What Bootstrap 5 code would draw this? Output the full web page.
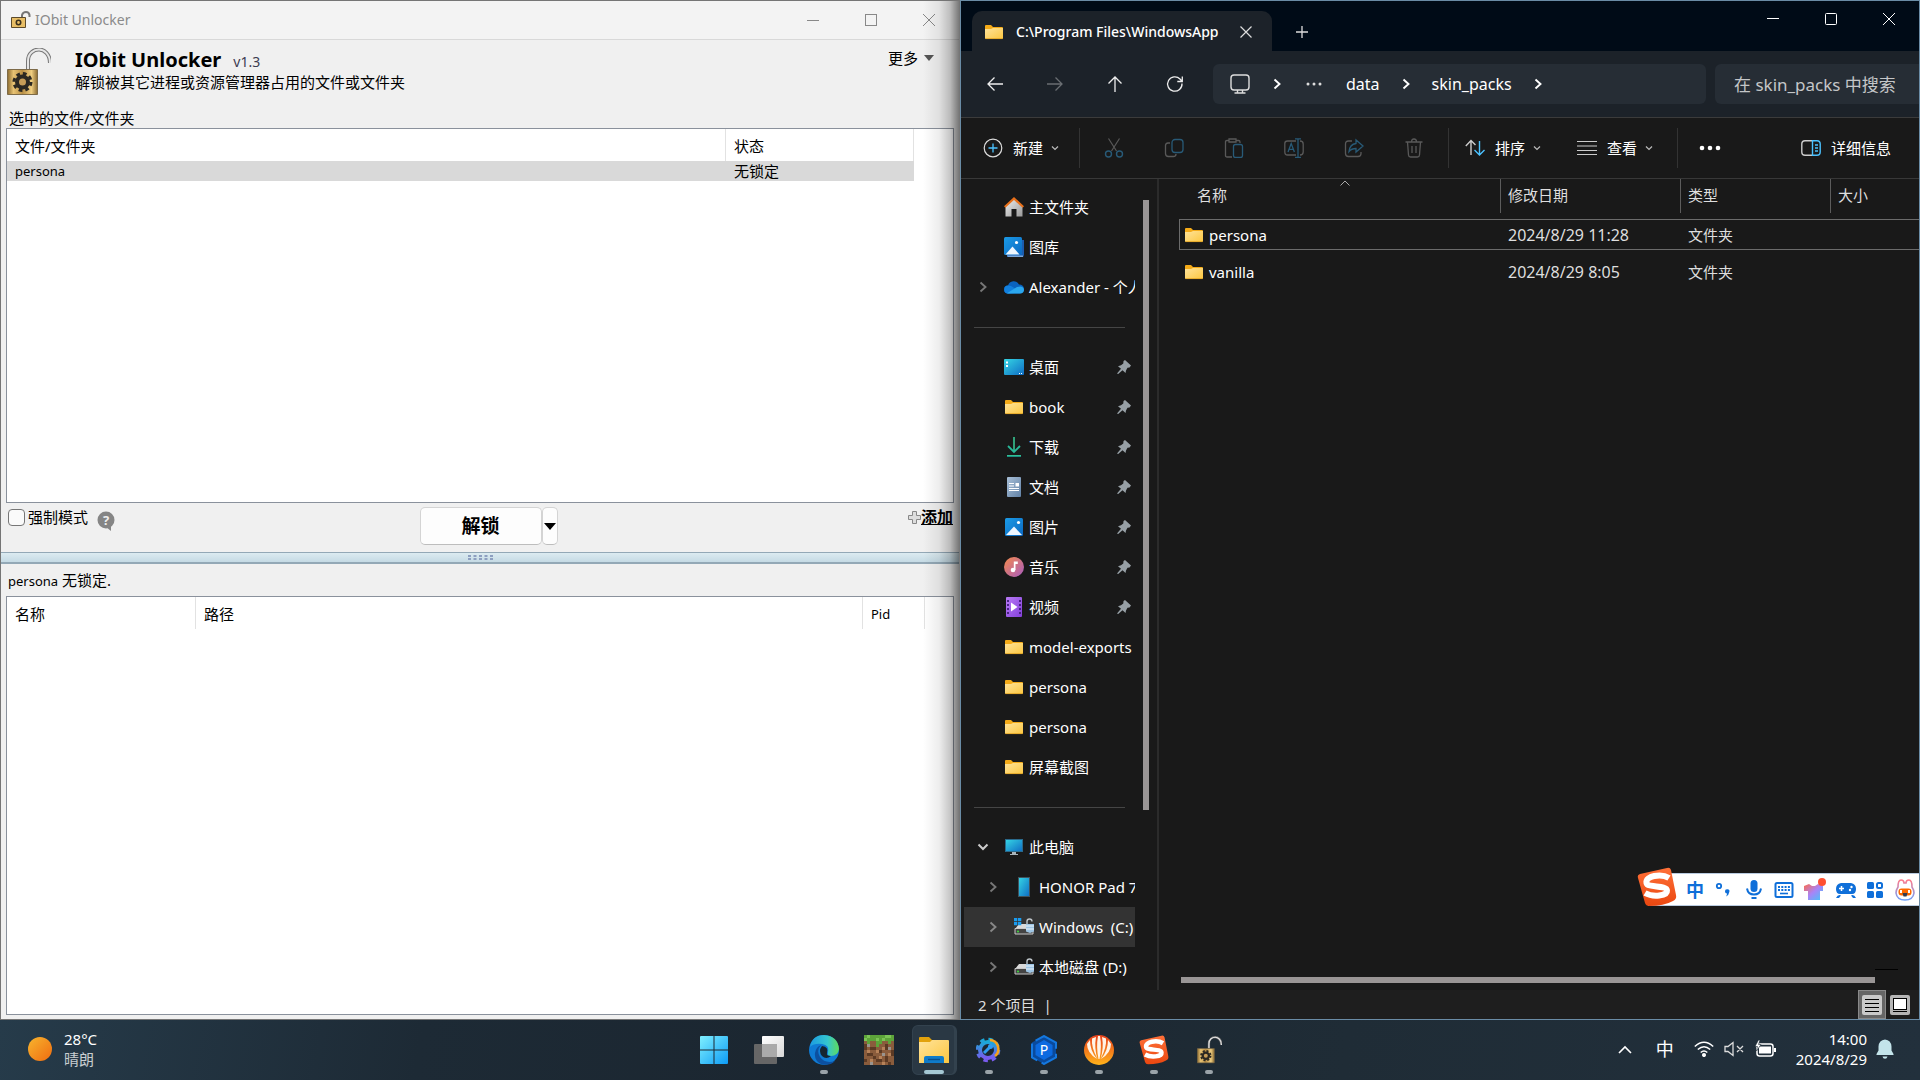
<!DOCTYPE html>
<html lang="zh-CN" data-bs-theme="light">
<head>
<meta charset="utf-8">
<meta name="viewport" content="width=device-width, initial-scale=1">
<title>Desktop</title>
<link href="https://cdn.jsdelivr.net/npm/bootstrap@5.3.0/dist/css/bootstrap.min.css" rel="stylesheet">
<style>
  body { font-family: "Noto Sans", "Noto Sans CJK SC", sans-serif; font-size: 15px; line-height: 20px; color: #000; background: #1b2731; }
  svg { display: block; flex: none; }
  button { background: none; border: 0; padding: 0; color: inherit; font: inherit; line-height: 20px; }
  a { color: inherit; text-decoration: none; }
  th { font-weight: 400; }
  .defs { position: absolute; width: 0; height: 0; }
  .desk { min-height: 0; }
  .pane { flex: 1 1 0; min-width: 0; }

  /* unlocker window */
  .unlocker { background: #f0f0f0; border: 1px solid #757575; overflow: hidden; }
  .unlocker::after { content: ""; position: absolute; inset: 0 0 0 auto; width: 36px; pointer-events: none; background: linear-gradient(90deg, rgba(0,0,0,0), rgba(0,0,0,.07) 45%, rgba(0,0,0,.22) 75%, rgba(0,0,0,.5)); }
  .u-title { height: 39px; background: #f3f3f3; border-bottom: 1px solid #d8d8d8; color: #8b8b8b; font-size: 14px; padding: 0 24px 0 10px; }
  .win-ctl { gap: 46px; }
  .u-head { height: 68px; padding: 8px 23px 0 6px; }
  .u-name { font-size: 20px; font-weight: 700; line-height: 24px; margin: 0; }
  .u-ver { font-size: 14px; color: #3c3c50; }
  .u-list { background: #fff; border: 1px solid #8a919c; margin: 0 5px; }
  .u-list table { width: 100%; table-layout: fixed; border-collapse: separate; border-spacing: 0; }
  .u-list th { height: 32px; padding: 2px 8px 0; border-right: 1px solid #e2e2e2; line-height: 20px; }
  .u-list th:last-child { border-right: 0; }
  .u-list td { height: 20px; line-height: 20px; padding: 0 8px; background: #d9d9d9; }
  .u-list td:last-child { background: none; }
  .small-latin { font-size: 13px; }
  .u-files { height: 375px; }
  .u-tools { height: 49px; padding: 4px 6px 0 7px; }
  .u-tools > div { flex: 1 1 0; }
  .u-force { gap: 3px; }
  .force { appearance: none; width: 17px; height: 17px; margin: 0; border: 1px solid #767676; border-radius: 4px; background: #fafafa; }
  .u-btn { height: 38px; background: #fdfdfd; border: 1px solid #d4d4d4; border-bottom-color: #bdbdbd; border-radius: 5px; }
  .u-main { width: 122px; font-size: 19px; font-weight: 700; }
  .u-drop { width: 16px; }
  .u-add { font-size: 16px; font-weight: 700; text-decoration: underline; }
  .u-split { height: 12px; border: solid #93a8b6; border-width: 1px 0 2px; background: linear-gradient(#dcebf1, #c5dae4); }
  .u-status { height: 32px; padding: 6px 7px; }

  /* file explorer */
  .explorer { background: #191919; border: 1px solid #6a8ca6; color: #fff; overflow: hidden; }
  .x-title { height: 50px; background: #000b17; padding-left: 11px; }
  .x-tab { width: 300px; height: 40px; background: #1c2229; border-radius: 10px 10px 0 0; padding: 2px 20px 0 12px; font-size: 14px; font-weight: 500; margin-top: 10px; }
  .x-nav { height: 67px; background: #1c2229; border-bottom: 1px solid #3b3b3b; padding: 13px 0 13px 24px; }
  .x-navbtns { gap: 40px; width: 228px; }
  .x-addr { height: 40px; background: #262d35; border-radius: 6px; font-size: 16px; padding: 0 14px 0 16px; gap: 21px; flex: 1 1 auto; }
  .x-search { width: 204px; height: 40px; margin-left: 9px; background: #262d35; border: 0; border-radius: 6px 0 0 6px; padding: 0 0 0 19px; font-size: 17px; color: #ccc; }
  .x-search::placeholder { color: #c4c6c8; opacity: 1; }
  .x-cmd { height: 61px; border-bottom: 1px solid #383838; padding: 0 28px 0 22px; }
  .x-edit { gap: 40px; }
  .x-lab { margin: 0 8px 0 10px; }
  .x-rule { width: 1px; height: 40px; background: #333; }
  .x-tree { width: 198px; padding: 8px 0 0 3px; border-right: 2px solid #2b2b2b; overflow: hidden; }
  .x-tree ul { width: 171px; list-style: none; margin: 0; padding: 0; }
  .x-item { height: 40px; padding-left: 9px; white-space: pre; overflow: hidden; }
  .x-item.sub { padding-left: 19px; }
  .x-item.picked { background: #333; }
  .x-chev { width: 20px; margin-right: 11px; flex: none; }
  .x-ico { width: 20px; margin-right: 5px; }
  .x-pin { margin-left: auto; margin-right: 4px; }
  .x-sep { height: 40px; padding: 20px 10px 0; }
  .x-sep hr { margin: 0; border-top: 1px solid #454545; opacity: 1; }
  .x-vbar { width: 6px; height: 610px; margin: 13px 0 0 8px; background: #999595; }
  .x-files { padding-left: 20px; }
  .x-files table { width: 100%; table-layout: fixed; border-collapse: separate; border-spacing: 0 6px; margin-top: -6px; }
  .x-files th { height: 34px; padding: 0 7px 2px; border-left: 1px solid #5c5c5c; color: #dedede; }
  .x-files th:first-child { border-left: 0; padding-left: 18px; }
  .x-files td { height: 31px; padding: 0 8px; border: solid transparent; border-width: 1px 0; color: #dedede; }
  .x-files td:first-child { border-left-width: 1px; padding: 0 4px; color: #fff; }
  .x-files .focused td { border-color: #6b6b6b; }
  .x-date { font-size: 16px; }
  .x-sort { position: absolute; left: 50%; top: 1px; }
  .x-hbar { height: 6px; background: #999595; margin: 0 44px 7px 2px; }
  .x-mark { position: absolute; right: 21px; bottom: 20px; width: 23px; height: 1px; background: #000; }
  .x-foot { height: 29px; background: #1e1e1e; padding: 0 9px 0 17px; color: #dedede; }
  .x-view { width: 28px; height: 29px; }
  .x-view.on { background: #666; border: 1px solid #8a8a8a; }

  /* input method bar */
  .ime { position: absolute; right: 0; bottom: 84px; height: 33px; padding: 0 3px 0 38px; gap: 10px; background: #fff; border: solid #b9cbe0; border-width: 1px 0; color: #0f6fd9; }
  .ime-logo { position: absolute; left: -11px; top: -7px; }
  .ime-word { font-size: 18px; font-weight: 700; }

  /* taskbar */
  .dock { height: 60px; color: #fff; background: linear-gradient(100deg, #263b4a, #1d2a35 22%, #1b2630 45%, #1f2c36 70%, #22303c 100%); }
  .dock > div { flex: 1 1 0; }
  .dock-weather { padding: 0 0 2px 28px; gap: 12px; }
  .dock-app { width: 55px; height: 60px; }
  .dock-app.open::after { content: ""; position: absolute; left: 50%; bottom: 6px; width: 8px; height: 4px; margin-left: -4px; border-radius: 2px; background: #9aa3a9; }
  .dock-app.front::before { content: ""; position: absolute; inset: 5px; border-radius: 6px; background: #2a3844; border: 1px solid #33424e; border-right-width: 3px; }
  .dock-app.front::after { width: 20px; margin-left: -10px; background: #a5c8d4; }
  .dock-app svg { position: relative; }
  .dock-tray { padding: 0 25px 2px 0; }
  .dock-ime { font-size: 18px; }
  .dock-status { gap: 10px; margin-right: 20px; }
</style>
</head>
<body class="vh-100 overflow-hidden d-flex flex-column">

<svg class="defs" aria-hidden="true">
  <defs>
    <linearGradient id="gFold" x1="0" y1="0" x2="1" y2="1"><stop offset="0" stop-color="#ffe39a"/><stop offset="1" stop-color="#fcc740"/></linearGradient>
    <linearGradient id="gBlue" x1="0" y1="0" x2="1" y2="1"><stop offset="0" stop-color="#35d6e4"/><stop offset="1" stop-color="#0f6cc4"/></linearGradient>
    <linearGradient id="gPic" x1="0" y1="0" x2="1" y2="1"><stop offset="0" stop-color="#1b9be6"/><stop offset="1" stop-color="#0b68c2"/></linearGradient>
    <linearGradient id="gHouse" x1="0" y1="0" x2="1" y2="1"><stop offset="0" stop-color="#eee"/><stop offset="1" stop-color="#9a9a9a"/></linearGradient>
    <linearGradient id="gDown" x1="0" y1="0" x2="0" y2="1"><stop offset="0" stop-color="#3dc98e"/><stop offset="1" stop-color="#15a8a0"/></linearGradient>
    <linearGradient id="gDoc" x1="0" y1="0" x2="1" y2="1"><stop offset="0" stop-color="#a9c0d8"/><stop offset="1" stop-color="#6282a6"/></linearGradient>
    <linearGradient id="gMus" x1="0" y1="0" x2="1" y2="1"><stop offset="0" stop-color="#f58a4b"/><stop offset="1" stop-color="#a85cc0"/></linearGradient>
    <linearGradient id="gVid" x1="0" y1="0" x2="1" y2="1"><stop offset="0" stop-color="#b87af5"/><stop offset="1" stop-color="#8440dc"/></linearGradient>
    <linearGradient id="gBrass" x1="0" y1="0" x2="1" y2="0"><stop offset="0" stop-color="#8a6a30"/><stop offset=".2" stop-color="#e8c374"/><stop offset=".5" stop-color="#b98f45"/><stop offset=".8" stop-color="#efcd80"/><stop offset="1" stop-color="#8a6a30"/></linearGradient>
    <linearGradient id="gSun" x1="0" y1="0" x2="1" y2="1"><stop offset="0" stop-color="#f7b52e"/><stop offset="1" stop-color="#f06c10"/></linearGradient>
    <linearGradient id="gWin" x1="0" y1="0" x2="1" y2="1"><stop offset="0" stop-color="#7ff0ff"/><stop offset="1" stop-color="#0d9bf5"/></linearGradient>
    <linearGradient id="gSogou" x1="0" y1="0" x2="0" y2="1"><stop offset="0" stop-color="#ff7038"/><stop offset="1" stop-color="#ea4710"/></linearGradient>
    <linearGradient id="gShirt" x1="0" y1="0" x2="1" y2="1"><stop offset="0" stop-color="#ff6b4a"/><stop offset=".5" stop-color="#a884f8"/><stop offset="1" stop-color="#3ec8f8"/></linearGradient>
    <linearGradient id="gGear" x1="0" y1="0" x2="0" y2="1"><stop offset="0" stop-color="#19a9d8"/><stop offset="1" stop-color="#7a5af0"/></linearGradient>
    <linearGradient id="gShell" x1="0" y1="0" x2="0" y2="1"><stop offset="0" stop-color="#e8401c"/><stop offset="1" stop-color="#ffb31a"/></linearGradient>
    <linearGradient id="gEdge" x1="0" y1="0" x2="1" y2="0"><stop offset="0" stop-color="#1c9be0"/><stop offset=".6" stop-color="#34c6d0"/><stop offset="1" stop-color="#5fdc5a"/></linearGradient>
    <linearGradient id="gTask" x1="0" y1="0" x2="1" y2="1"><stop offset="0" stop-color="#fff"/><stop offset="1" stop-color="#d8d8d8"/></linearGradient>
    <linearGradient id="gFox" x1="0" y1="0" x2="0" y2="1"><stop offset="0" stop-color="#ff7c8c"/><stop offset="1" stop-color="#6ea0f8"/></linearGradient>
  </defs>
  <symbol id="folder" viewBox="0 0 20 16"><path d="M1 2a1 1 0 0 1 1-1h5l2 2h9a1 1 0 0 1 1 1v3H1z" fill="#f5ab18"/><path d="M1 5h6l2-1h10v10a1 1 0 0 1-1 1H2a1 1 0 0 1-1-1z" fill="url(#gFold)"/><path d="M1.500 14.600h17" stroke="#e0a020" stroke-width=".8"/></symbol>
  <symbol id="chev" viewBox="0 0 10 14"><path d="M2.500 2.500 7.500 7l-5 4.500" fill="none" stroke="currentColor" stroke-width="1.900"/></symbol>
  <symbol id="down" viewBox="0 0 8 6"><path d="M1 1.500 4 4.500 7 1.500" fill="none" stroke="#bbb" stroke-width="1.200"/></symbol>
  <symbol id="pin" viewBox="0 0 14 14"><path d="M8 0 14 5.500 12.500 7.500l-2 .3L9 10.500 8.500 13 5.500 10.300 1.200 14 0 13.500 4 8.800 1 6.200 4 5.200 6.300 3.500 6.500 1z" fill="#97a0a6"/></symbol>
  <symbol id="drive" viewBox="0 0 20 18"><path d="M5 6h12l2 5H1z" fill="#d9d9d9"/><path d="M1 10.500h18V16H1z" fill="#444" stroke="#c9c9c9"/><circle cx="4" cy="13.500" r="1" fill="#3fe03f"/><path d="M13 7V3.500a2.500 2.500 0 0 1 5 0" fill="none" stroke="#bcc3c8" stroke-width="1.400"/><path d="M12 6h8v7.500l-4 1.500-4-1.500z" fill="#9ec5e4"/><path d="M12 8h8M12 11h8" stroke="#fff" stroke-width=".8"/></symbol>
  <symbol id="lock" viewBox="0 0 44 48"><path d="M21 21V13C21 5 27 1.500 32 1.500S43 6 43 15" fill="none" stroke="#777" stroke-width="4"/><path d="M21 21V13C21 5 27 1.500 32 1.500S43 6 43 15" fill="none" stroke="#e6e6e6" stroke-width="2"/><path d="M.5 21.500h30v25H.5z" fill="url(#gBrass)" stroke="#7d6a48"/><circle cx="15.500" cy="34" r="7.500" fill="#2b2822"/><circle cx="15.500" cy="34" r="8.500" fill="none" stroke="#2b2822" stroke-width="3" stroke-dasharray="3.700 3"/><circle cx="15.500" cy="34" r="3.500" fill="#c79d58"/></symbol>
  <symbol id="sogou" viewBox="0 0 40 40"><path d="M3 7 30 1q3-1 4 2l5 25q1 4-3 6-9 5-24 5-3 0-4-3L1 11q-1-3 2-4z" fill="url(#gSogou)"/><path d="M32 11C24 6 8 9 9.500 16c1 5 20 2 20.500 7.500.5 5.500-14 7-22 2.500" fill="none" stroke="#fff" stroke-width="6"/></symbol>
</svg>

<main class="desk flex-grow-1 d-flex">

  <!-- Unlocker -->
  <section class="pane unlocker position-relative d-flex flex-column">
    <header class="u-title d-flex align-items-center flex-shrink-0">
      <svg width="20" height="18" viewBox="0 0 20 18"><path d="M11 7V4q1-3 4-3t3.500 3v2" fill="none" stroke="#777" stroke-width="2"/><path d="M.5 6.500h14v10H.5z" fill="#e8be66" stroke="#5c4a2a"/><circle cx="7.500" cy="11.500" r="2.200" fill="none" stroke="#3a2f1c" stroke-width="1.600"/></svg>
      <span class="ms-1">IObit Unlocker</span>
      <div class="win-ctl d-flex ms-auto">
        <button aria-label="最小化"><svg width="12" height="12" viewBox="0 0 12 12"><path d="M0 6.500h12" stroke="#888"/></svg></button>
        <button aria-label="最大化"><svg width="12" height="12" viewBox="0 0 12 12"><rect x=".5" y=".5" width="11" height="11" fill="none" stroke="#888"/></svg></button>
        <button aria-label="关闭"><svg width="12" height="12" viewBox="0 0 12 12"><path d="m0 0 12 12M12 0 0 12" stroke="#888"/></svg></button>
      </div>
    </header>
    <div class="u-head d-flex flex-shrink-0">
      <svg width="44" height="48"><use href="#lock"/></svg>
      <div class="ms-4">
        <div class="d-flex align-items-baseline"><h1 class="u-name">IObit Unlocker</h1><span class="u-ver ms-2 ps-1">v1.3</span></div>
        <div>解锁被其它进程或资源管理器占用的文件或文件夹</div>
      </div>
      <button class="ms-auto d-flex align-items-center align-self-start">更多<svg class="ms-1" width="14" height="8" viewBox="0 0 14 8"><path d="M2 1h10L7 7z" fill="#555"/></svg></button>
    </div>
    <div class="ps-2 flex-shrink-0">选中的文件/文件夹</div>
    <div class="u-list u-files flex-shrink-0">
      <table>
        <colgroup><col><col style="width:188px"><col style="width:39px"></colgroup>
        <thead><tr><th>文件/文件夹</th><th>状态</th><th></th></tr></thead>
        <tbody><tr><td class="small-latin">persona</td><td>无锁定</td><td></td></tr></tbody>
      </table>
    </div>
    <div class="u-tools d-flex flex-shrink-0">
      <div class="d-flex align-items-start">
        <label class="u-force d-flex align-items-center"><input class="force" type="checkbox">强制模式</label>
        <svg class="ms-2 mt-1" width="20" height="20" viewBox="0 0 20 20"><circle cx="10" cy="9" r="8.500" fill="#858585"/><path d="m10 16 5 4v-5z" fill="#858585"/><text x="10" y="14" font-size="13" font-weight="700" text-anchor="middle" fill="#eee">?</text></svg>
      </div>
      <span class="d-flex align-items-start ms-3"><button class="u-btn u-main">解锁</button><button class="u-btn u-drop d-flex align-items-center justify-content-center" aria-label="更多选项"><svg width="12" height="7" viewBox="0 0 12 7"><path d="M0 0h12L6 7z" fill="#000"/></svg></button></span>
      <div class="d-flex align-items-start justify-content-end">
        <a href="#" class="d-flex align-items-center"><svg width="13" height="13" viewBox="0 0 13 13"><path d="M4.500.5h4v4h4v4h-4v4h-4v-4h-4v-4h4z" fill="#ddd" stroke="#888"/></svg><span class="u-add">添加</span></a>
      </div>
    </div>
    <div class="u-split d-flex align-items-center justify-content-center flex-shrink-0"><svg width="25" height="5" viewBox="0 0 25 5"><path d="M0 1h25M0 4h25" stroke="#8e9fc0" stroke-width="2" stroke-dasharray="3 2.500"/></svg></div>
    <div class="u-status flex-shrink-0"><span class="small-latin">persona</span> 无锁定.</div>
    <div class="u-list flex-grow-1 mb-1">
      <table>
        <colgroup><col style="width:189px"><col><col style="width:62px"><col style="width:28px"></colgroup>
        <thead><tr><th>名称</th><th>路径</th><th class="small-latin">Pid</th><th></th></tr></thead>
      </table>
    </div>
  </section>

  <!-- Explorer -->
  <section class="pane explorer position-relative d-flex flex-column">
    <header class="x-title d-flex flex-shrink-0">
      <div class="x-tab d-flex align-items-center">
        <svg width="20" height="16"><use href="#folder"/></svg>
        <span class="ms-2 ps-1 flex-grow-1 overflow-hidden text-nowrap">C:\Program Files\WindowsApp</span>
        <button class="ms-3" aria-label="关闭标签页"><svg width="12" height="12" viewBox="0 0 12 12"><path d="m.5.5 11 11M11.500.5l-11 11" stroke="#ddd" stroke-width="1.200"/></svg></button>
      </div>
      <button class="ms-4 mt-2 pt-1" aria-label="新标签页"><svg width="12" height="12" viewBox="0 0 12 12"><path d="M0 6h12M6 0v12" stroke="#ddd" stroke-width="1.300"/></svg></button>
      <div class="win-ctl d-flex align-items-start ms-auto pt-1 mt-2 me-4">
        <button aria-label="最小化"><svg width="12" height="12" viewBox="0 0 12 12"><path d="M0 5.500h12" stroke="#fff"/></svg></button>
        <button aria-label="最大化"><svg width="12" height="12" viewBox="0 0 12 12"><rect x=".5" y=".5" width="11" height="11" rx="1" fill="none" stroke="#fff"/></svg></button>
        <button aria-label="关闭"><svg width="12" height="12" viewBox="0 0 12 12"><path d="m0 0 12 12M12 0 0 12" stroke="#fff"/></svg></button>
      </div>
    </header>
    <nav class="x-nav d-flex flex-shrink-0">
      <div class="x-navbtns d-flex align-items-center flex-shrink-0">
        <button aria-label="后退"><svg width="20" height="20" viewBox="0 0 20 20"><path d="M18 10H3M9.500 3.500 3 10l6.500 6.500" fill="none" stroke="#eee" stroke-width="1.300"/></svg></button>
        <button aria-label="前进"><svg width="20" height="20" viewBox="0 0 20 20"><path d="M2 10h15M10.500 3.500 17 10l-6.500 6.500" fill="none" stroke="#6a6e72" stroke-width="1.300"/></svg></button>
        <button aria-label="向上"><svg width="20" height="20" viewBox="0 0 20 20"><path d="M10 18V3M3.500 9.500 10 3l6.500 6.500" fill="none" stroke="#eee" stroke-width="1.300"/></svg></button>
        <button aria-label="刷新"><svg width="20" height="20" viewBox="0 0 20 20"><path d="M17 9.500a7.200 7.200 0 1 1-2-4.500l2 2.200M17.300 2.500v5h-5" fill="none" stroke="#eee" stroke-width="1.300"/></svg></button>
      </div>
      <div class="x-addr d-flex align-items-center">
        <svg width="22" height="22" viewBox="0 0 22 22" fill="none" stroke="#ddd" stroke-width="1.400"><rect x="2" y="2" width="18" height="15" rx="3"/><path d="M8.500 17v3M13.500 17v3M5.500 20h11"/></svg>
        <svg width="10" height="14"><use href="#chev"/></svg>
        <button aria-label="更多位置"><svg width="22" height="6" viewBox="0 0 22 6"><g fill="#ddd"><circle cx="5" cy="3" r="1.500"/><circle cx="11" cy="3" r="1.500"/><circle cx="17" cy="3" r="1.500"/></g></svg></button>
        <a href="#">data</a>
        <svg width="10" height="14"><use href="#chev"/></svg>
        <a href="#">skin_packs</a>
        <svg width="10" height="14"><use href="#chev"/></svg>
      </div>
      <input class="x-search" type="search" placeholder="在 skin_packs 中搜索" aria-label="搜索">
    </nav>
    <div class="x-cmd d-flex align-items-center flex-shrink-0">
      <button class="d-flex align-items-center me-3"><svg width="20" height="20" viewBox="0 0 20 20" fill="none"><circle cx="10" cy="10" r="8.800" stroke="#ddd" stroke-width="1.200"/><path d="M10 5.500v9M5.500 10h9" stroke="#4cc2ff" stroke-width="1.300"/></svg><span class="x-lab">新建</span><svg width="8" height="6"><use href="#down"/></svg></button>
      <span class="x-rule ms-1 me-4"></span>
      <div class="x-edit d-flex">
        <button disabled aria-label="剪切"><svg width="20" height="20" viewBox="0 0 20 20" fill="none" stroke-width="1.200"><path d="M4.500.5 12.500 13M15.500.5 7.500 13" stroke="#595959"/><g stroke="#285a77" stroke-width="1.400"><circle cx="4.500" cy="16" r="3"/><circle cx="15.500" cy="16" r="3"/></g></svg></button>
        <button disabled aria-label="复制"><svg width="20" height="20" viewBox="0 0 20 20" fill="none" stroke-width="1.300"><path d="M6 5H4Q1.500 5 1.500 7.500v8Q1.500 18.500 4.500 18.500h5q2.500 0 2.500-2.500" stroke="#595959"/><rect x="8" y="1.500" width="11" height="13" rx="3" stroke="#285a77"/></svg></button>
        <button disabled aria-label="粘贴"><svg width="20" height="20" viewBox="0 0 20 20" fill="none" stroke-width="1.300"><path d="M8 19H3q-1.500 0-1.500-1.500v-14Q1.500 2.500 3 2.500h2M12 2.500h2.500q1.500 0 1.500 1.500v1M5 1h7v3H5z" stroke="#595959"/><rect x="9.500" y="6.500" width="9" height="13" rx="2" stroke="#285a77"/></svg></button>
        <button disabled aria-label="重命名"><svg width="20" height="20" viewBox="0 0 20 20" fill="none" stroke-width="1.300"><path d="M12 17H3.500Q.8 17 .8 14V5.500Q.8 3 3.500 3H12M16 3q3.200 0 3.200 3v8q0 3-3.200 3" stroke="#595959"/><path d="M11 .8h6M14 .8v18.500M11 19.300h6M4 14l3.200-8.500L10.400 14M5 11.300h4.400" stroke="#285a77"/></svg></button>
        <button disabled aria-label="共享"><svg width="20" height="20" viewBox="0 0 20 20" fill="none" stroke-width="1.300"><path d="M8 3H4.500q-3 0-3 3v9.500q0 3 3 3H14q3 0 3-3V14" stroke="#595959"/><path d="M12 2v3.500C8 6 5.500 9 5 13.500 7 11 9 10.500 12 10.500V14l7-6z" stroke="#285a77"/></svg></button>
        <button disabled aria-label="删除"><svg width="20" height="20" viewBox="0 0 20 20" fill="none" stroke="#595959" stroke-width="1.300"><path d="M1.500 4h17M7.500 4q0-3 2.500-3t2.500 3M3.500 4l1 13q.2 2 2 2h7q1.800 0 2-2l1-13M8 8v7M12 8v7"/></svg></button>
      </div>
      <span class="x-rule ms-4 me-3"></span>
      <button class="d-flex align-items-center me-4"><svg width="20" height="20" viewBox="0 0 20 20" fill="none" stroke-width="1.400"><path d="M6 17V3M.8 8 6 2.500 10.500 7" stroke="#ccc"/><path d="M14.500 3v14M9.500 12l5 5 5-5" stroke="#4cc2ff"/></svg><span class="x-lab">排序</span><svg width="8" height="6"><use href="#down"/></svg></button>
      <button class="d-flex align-items-center ms-2 ps-1 me-4"><svg width="20" height="16" viewBox="0 0 20 16"><path d="M0 1.500h20M0 6h20M0 10.500h20M0 14.500h20" stroke="#ccc" stroke-width="1.200"/></svg><span class="x-lab">查看</span><svg width="8" height="6"><use href="#down"/></svg></button>
      <span class="x-rule me-3"></span>
      <button class="ms-1" aria-label="查看更多"><svg width="24" height="6" viewBox="0 0 24 6"><g fill="#fff"><circle cx="4" cy="3" r="2.300"/><circle cx="12" cy="3" r="2.300"/><circle cx="20" cy="3" r="2.300"/></g></svg></button>
      <button class="d-flex align-items-center ms-auto"><svg width="20" height="16" viewBox="0 0 20 16" fill="none" stroke-width="1.400"><path d="M12 .8H4Q.8.8.8 4v8q0 3.200 3.200 3.200h8" stroke="#ccc"/><path d="M11.500.8H16q3.200 0 3.200 3.200v8q0 3.200-3.200 3.200h-4.500zM14 5h3M14 8h3M14 11h3" stroke="#4cc2ff"/></svg><span class="x-lab me-0">详细信息</span></button>
    </div>

    <div class="desk d-flex flex-grow-1">
      <div class="x-tree d-flex flex-shrink-0">
        <ul class="flex-shrink-0">
          <li class="x-item d-flex align-items-center"><span class="x-chev"></span><svg class="x-ico" height="20" viewBox="0 0 20 20"><path d="M1.500 9 10 2l8.500 7v10.500h-6V12h-5v7.500h-6z" fill="url(#gHouse)"/><path d="M.7 10 10 1.500 19.300 10" fill="none" stroke="#e8701a" stroke-width="2.200"/></svg>主文件夹</li>
          <li class="x-item d-flex align-items-center"><span class="x-chev"></span><svg class="x-ico" height="20" viewBox="0 0 20 20"><path d="M3 3h17v15q0 2-2 2H3z" fill="#1c5cae"/><path d="M3 18.500h16V20H4z" fill="#7aa8dc"/><rect width="18" height="18" rx="1.500" fill="url(#gPic)"/><circle cx="12.500" cy="5.500" r="1.600" fill="#fff"/><path d="m1.500 17.500 7-8 7 8z" fill="#eef6ff"/></svg>图库</li>
          <li class="x-item d-flex align-items-center"><span class="x-chev"><svg class="mx-auto" width="10" height="14" color="#777"><use href="#chev"/></svg></span><svg class="x-ico" height="16" viewBox="0 0 20 16"><path d="M4 14.500a4 4 0 0 1 0-8 6 6 0 0 1 11-1 4.500 4.500 0 0 1 1 9z" fill="#0a63c0"/><path d="M4 14.500a4 4 0 0 1 .5-8q2.500 0 5 2l7 5z" fill="#1280de"/><path d="M3 14.300 13 8q6-2 7 2.500 0 4-4 4H4z" fill="#2ba7ee"/></svg>Alexander - 个人</li>
          <li class="x-sep"><hr></li>
          <li class="x-item d-flex align-items-center"><span class="x-chev"></span><svg class="x-ico" height="16" viewBox="0 0 20 16"><rect width="20" height="16" rx="1" fill="url(#gBlue)"/><path d="M2 2.500h2v2H2zM2 6h2v2H2z" fill="#fff"/><path d="M15 14.500h1M17 14.500h1" stroke="#fff"/></svg>桌面<svg class="x-pin" width="14" height="14"><use href="#pin"/></svg></li>
          <li class="x-item d-flex align-items-center"><span class="x-chev"></span><svg class="x-ico" height="16"><use href="#folder"/></svg>book<svg class="x-pin" width="14" height="14"><use href="#pin"/></svg></li>
          <li class="x-item d-flex align-items-center"><span class="x-chev"></span><svg class="x-ico" height="20" viewBox="0 0 20 20"><path d="M9.200 0h1.600v14H9.200z" fill="#36c592"/><path d="m4 9 6 6 6-6" fill="none" stroke="#28b898" stroke-width="1.800"/><path d="M3 18h14v1.800H3z" fill="url(#gDown)"/></svg>下载<svg class="x-pin" width="14" height="14"><use href="#pin"/></svg></li>
          <li class="x-item d-flex align-items-center"><span class="x-chev"></span><svg class="x-ico" height="20" viewBox="0 0 20 20"><rect x="3" width="14" height="20" rx="1" fill="url(#gDoc)"/><path d="M5 6.500h5M5 9h5M5 11.500h10M5 13.500h10" stroke="#fff" stroke-width="1.200"/><path d="M11.500 6H15v3.500h-3.500z" fill="#fff"/></svg>文档<svg class="x-pin" width="14" height="14"><use href="#pin"/></svg></li>
          <li class="x-item d-flex align-items-center"><span class="x-chev"></span><svg class="x-ico" height="20" viewBox="0 0 20 20"><rect x="1" y="1" width="18" height="18" rx="1.500" fill="url(#gPic)"/><circle cx="14.500" cy="5.500" r="1.600" fill="#fff"/><path d="m2 18 8-8.500 8 8.500z" fill="#eef6ff"/></svg>图片<svg class="x-pin" width="14" height="14"><use href="#pin"/></svg></li>
          <li class="x-item d-flex align-items-center"><span class="x-chev"></span><svg class="x-ico" height="20" viewBox="0 0 20 20"><circle cx="10" cy="10" r="10" fill="url(#gMus)"/><circle cx="9" cy="13" r="2.300" fill="#fff"/><path d="M9.800 13V4.500h4V7h-2.300v6z" fill="#fff"/></svg>音乐<svg class="x-pin" width="14" height="14"><use href="#pin"/></svg></li>
          <li class="x-item d-flex align-items-center"><span class="x-chev"></span><svg class="x-ico" height="20" viewBox="0 0 20 20"><rect x="2" width="16" height="20" rx="1" fill="url(#gVid)"/><path d="M4 3v15M16 3v15" stroke="#3f1c78" stroke-width="1.800" stroke-dasharray="2 2"/><path d="m7 5.500 6.500 4.500L7 14.500z" fill="#fff"/></svg>视频<svg class="x-pin" width="14" height="14"><use href="#pin"/></svg></li>
          <li class="x-item d-flex align-items-center"><span class="x-chev"></span><svg class="x-ico" height="16"><use href="#folder"/></svg>model-exports</li>
          <li class="x-item d-flex align-items-center"><span class="x-chev"></span><svg class="x-ico" height="16"><use href="#folder"/></svg>persona</li>
          <li class="x-item d-flex align-items-center"><span class="x-chev"></span><svg class="x-ico" height="16"><use href="#folder"/></svg>persona</li>
          <li class="x-item d-flex align-items-center"><span class="x-chev"></span><svg class="x-ico" height="16"><use href="#folder"/></svg>屏幕截图</li>
          <li class="x-sep"><hr></li>
          <li class="x-item d-flex align-items-center"><span class="x-chev"><svg class="mx-auto" width="12" height="8" viewBox="0 0 12 8"><path d="m1.500 1.500 4.500 4.500 4.500-4.500" fill="none" stroke="#ccc" stroke-width="2"/></svg></span><svg class="x-ico" height="18" viewBox="0 0 20 18"><rect x="1.500" y="1.500" width="17" height="12" fill="url(#gBlue)" stroke="#2a6a8c"/><path d="M8 14h4v2h2v1H6v-1h2z" fill="#a9b4ba"/></svg>此电脑</li>
          <li class="x-item sub d-flex align-items-center"><span class="x-chev"><svg class="mx-auto" width="10" height="14" color="#777"><use href="#chev"/></svg></span><svg class="x-ico" height="20" viewBox="0 0 20 20"><rect x="4.500" y=".5" width="11" height="19" fill="url(#gBlue)" stroke="#40525c"/></svg>HONOR Pad 7</li>
          <li class="x-item sub picked d-flex align-items-center"><span class="x-chev"><svg class="mx-auto" width="10" height="14" color="#888"><use href="#chev"/></svg></span><svg class="x-ico" height="18" viewBox="0 0 20 18"><use href="#drive" width="20" height="18"/><path d="M0 0h3.300v3.300H0zM4 0h3.300v3.300H4zM0 4h3.300v3.300H0zM4 4h3.300v3.300H4z" fill="#1a9cf0"/></svg>Windows  (C:)</li>
          <li class="x-item sub d-flex align-items-center"><span class="x-chev"><svg class="mx-auto" width="10" height="14" color="#777"><use href="#chev"/></svg></span><svg class="x-ico" height="18"><use href="#drive"/></svg>本地磁盘 (D:)</li>
        </ul>
        <div class="x-vbar flex-shrink-0"></div>
      </div>
      <div class="x-files flex-grow-1 d-flex flex-column position-relative">
        <table>
          <colgroup><col><col style="width:180px"><col style="width:150px"><col style="width:89px"></colgroup>
          <thead><tr><th class="position-relative">名称<svg class="x-sort" width="10" height="6" viewBox="0 0 10 6"><path d="m.5 5.500 4.500-4.500 4.500 4.500" fill="none" stroke="#aaa"/></svg></th><th>修改日期</th><th>类型</th><th>大小</th></tr></thead>
          <tbody>
            <tr class="focused"><td><a href="#" class="d-flex align-items-center"><svg class="x-ico" height="16"><use href="#folder"/></svg>persona</a></td><td class="x-date">2024/8/29 11:28</td><td>文件夹</td><td></td></tr>
            <tr><td><a href="#" class="d-flex align-items-center"><svg class="x-ico" height="16"><use href="#folder"/></svg>vanilla</a></td><td class="x-date">2024/8/29 8:05</td><td>文件夹</td><td></td></tr>
          </tbody>
        </table>
        <div class="ime d-flex align-items-center">
          <svg class="ime-logo" width="40" height="40"><use href="#sogou"/></svg>
          <span class="ime-word">中</span>
          <svg width="20" height="20" viewBox="0 0 20 20"><circle cx="5" cy="6" r="2.200" fill="none" stroke="#0f6fd9" stroke-width="1.800"/><path d="M11 11.500a2.200 2.200 0 1 1 4.300.5q-.3 3-3.300 4.500 1-1.500 1-3-2 0-2-2z" fill="#0f6fd9"/></svg>
          <svg width="20" height="20" viewBox="0 0 20 20"><rect x="6.500" y="0" width="7" height="12" rx="3.500" fill="#0f6fd9"/><path d="M3 8.500q1 6 7 6t7-6" fill="none" stroke="#0f6fd9" stroke-width="2"/><path d="M7.500 17h5v2h-5z" fill="#0f6fd9"/></svg>
          <svg width="20" height="20" viewBox="0 0 20 20" fill="none" stroke="#0f6fd9"><rect x="1.500" y="3" width="17" height="14" rx="1.500" stroke-width="2"/><path d="M4 7h12M4 10h12" stroke-width="1.800" stroke-dasharray="2 1.300"/><path d="M6 13.500h8" stroke-width="1.600"/></svg>
          <svg width="22" height="24" viewBox="0 0 22 24"><path d="m5 6 3 2h3l3-2 5 2v5h-3v9H4v-9H0V8z" fill="url(#gShirt)"/><circle cx="18" cy="4" r="4" fill="#ff4f30"/></svg>
          <svg width="20" height="20" viewBox="0 0 20 20"><path d="M5 3h10q5 1 5 6t-4 5H4q-4 0-4-5t5-6z" fill="#0f6fd9"/><path d="M3 8.500h5M5.500 6v5" stroke="#fff" stroke-width="1.500"/><circle cx="14" cy="10" r="1.200" fill="#fff"/><circle cx="15.500" cy="7" r="1.200" fill="#fff"/><path d="M0 18q2-4 5-2.500L3 18zM20 18q-2-4-5-2.500L17 18z" fill="#0f6fd9"/></svg>
          <svg width="18" height="18" viewBox="0 0 18 18" fill="#0f6fd9"><rect x="1" y="1" width="7" height="7" rx="1.500"/><rect x="1" y="10" width="7" height="7" rx="1.500"/><rect x="10" y="10" width="7" height="7" rx="1.500"/><rect x="11" y="2" width="5" height="5" rx="1.500" fill="none" stroke="#0f6fd9" stroke-width="2"/></svg>
          <svg width="22" height="22" viewBox="0 0 22 22"><path d="M4 8Q4 1 7 1t3 3h2q0-3 3-3t3 7q2 3 2 6-1 7-9 7t-9-7q0-3 2-6z" fill="#fff" stroke="url(#gFox)" stroke-width="1.600"/><rect x="4.500" y="9.500" width="13" height="7" rx="3" fill="#ff6a00"/><path d="M7 11v3M15 11v3" stroke="#fff" stroke-width="2"/><path d="M8.500 14h5l-1 3.500h-3z" fill="#333c50"/></svg>
        </div>
        <div class="x-mark"></div>
        <div class="x-hbar mt-auto"></div>
      </div>
    </div>
    <footer class="x-foot d-flex align-items-center flex-shrink-0">
      <span>2 个项目</span><span class="ms-2">|</span>
      <div class="ms-auto d-flex">
        <button class="x-view on d-flex align-items-center justify-content-center" aria-label="详细信息视图"><svg width="20" height="20" viewBox="0 0 20 20"><rect width="20" height="20" rx="2" fill="#c9c9c9"/><path d="M3 4.500h14M3 8.500h14M3 12.500h14M3 16.500h14" stroke="#000"/></svg></button>
        <button class="ms-1" aria-label="缩略图视图"><svg width="20" height="20" viewBox="0 0 20 20"><rect width="20" height="20" rx="2" fill="#b5b5b5"/><rect x="3.500" y="3.500" width="13" height="11" fill="#fff" stroke="#000"/><path d="M3 16.500h14" stroke="#000"/></svg></button>
      </div>
    </footer>
  </section>
</main>

<!-- Taskbar -->
<footer class="dock d-flex align-items-center flex-shrink-0">
  <div class="dock-weather d-flex align-items-center">
    <svg width="24" height="24" viewBox="0 0 24 24"><circle cx="12" cy="12" r="12" fill="url(#gSun)"/></svg>
    <span>28°C<br><span class="opacity-75">晴朗</span></span>
  </div>
  <nav class="d-flex">
    <button class="dock-app position-relative d-flex align-items-center justify-content-center" aria-label="开始"><svg width="30" height="30" viewBox="0 0 30 30"><path d="M1 2q0-1 1-1h12.500v13.500H1zM15.500 1H28q1 0 1 1v12.500H15.500zM1 15.500h13.500V29H2q-1 0-1-1zM15.500 15.500H29V28q0 1-1 1H15.500z" fill="url(#gWin)"/></svg></button>
    <button class="dock-app position-relative d-flex align-items-center justify-content-center" aria-label="任务视图"><svg width="30" height="30" viewBox="0 0 30 30"><rect x="8" y="1" width="22" height="21" rx="1" fill="url(#gTask)"/><rect y="9" width="23" height="20" rx="1" fill="#666"/><path d="M8 9h15v13H8z" fill="#aaa"/></svg></button>
    <button class="dock-app open position-relative d-flex align-items-center justify-content-center" aria-label="Edge"><svg width="30" height="30" viewBox="0 0 30 30"><circle cx="15" cy="15" r="15" fill="#0f7bd4"/><path d="M1 12Q3 0 15 0q14 1 15 14-1 7-8 7-4 0-3-3 2-8-6-9-8-1-12 3z" fill="url(#gEdge)"/><path d="M12 10q-5 5-1 12 5 7 15 4-5 5-13 3.500Q5 26 6 18q1-6 6-8z" fill="#0c50a0"/><path d="M13 11q7 1 5 7-1 3 4 3-5 4-9 0-4-5 0-10z" fill="#152632"/></svg></button>
    <button class="dock-app position-relative d-flex align-items-center justify-content-center" aria-label="Minecraft"><svg width="30" height="30" viewBox="0 0 30 30" shape-rendering="crispEdges"><path d="M0 0h30v30H0z" fill="#8a5c3c"/><path d="M0 0h30v6h-3v3h-3V6h-6v3h-3v3h-3V6H6v3H3V6H0z" fill="#5da43a"/><path d="M3 0h3v3H3zM12 3h3v3h-3zM21 0h6v3h-6zM0 3h3v3H0zM18 3h3v3h-3z" fill="#7cc455"/><path d="M0 9h3v6H0zM6 12h6v3H6zM15 15h3v3h-3zM21 9h3v6h-3zM27 15h3v6h-3zM3 18h6v3H3zM12 24h6v3h-6zM21 21h3v6h-3zM0 24h3v3H0zM9 21h3v3H9zM24 27h3v3h-3z" fill="#5c3a24"/><path d="M3 9h3v3H3zM18 18h3v3h-3zM6 27h3v3H6zM24 12h3v3h-3z" fill="#9a948e"/><path d="M12 15h3v3h-3zM3 15h3v3H3zM18 12h3v3h-3zM24 18h3v3h-3zM6 24h3v3H6zM18 27h3v3h-3zM15 21h3v3h-3z" fill="#b68259"/></svg></button>
    <button class="dock-app open front position-relative d-flex align-items-center justify-content-center" aria-label="文件资源管理器"><svg width="30" height="28" viewBox="0 0 30 28"><path d="M0 2q0-1 1-1h9l3 3h16v6H0z" fill="#e2a20c"/><path d="M0 6h11l2-2h16q1 0 1 1v22H0z" fill="url(#gFold)"/><path d="M5 27v-5q0-2 2-2h16q2 0 2 2v5z" fill="#0f7bc9"/><path d="M9 23.500h12" stroke="#0a4f8c" stroke-width="1.400"/></svg></button>
    <button class="dock-app open position-relative d-flex align-items-center justify-content-center" aria-label="电脑管家"><svg width="26" height="28" viewBox="0 0 26 28"><circle cx="12" cy="14" r="8" fill="none" stroke="url(#gGear)" stroke-width="4"/><circle cx="12" cy="14" r="10.800" fill="none" stroke="url(#gGear)" stroke-width="3" stroke-dasharray="4.500 4"/><path d="M14 4a9 9 0 0 1 5 16" fill="none" stroke="#f5a21c" stroke-width="2.500"/><path d="m8 17 6-6" stroke="#2f9bf0" stroke-width="3"/><circle cx="14.500" cy="10.500" r="2.500" fill="#2f9bf0"/></svg></button>
    <button class="dock-app open position-relative d-flex align-items-center justify-content-center" aria-label="P"><svg width="28" height="30" viewBox="0 0 28 30"><path d="M14 1 26 7.500v15L14 29 2 22.500v-15z" fill="#0a4a9c" stroke="#1478e0" stroke-width="2" stroke-dasharray="20 5"/><path d="m14 5 8.500 5v10L14 25l-8.500-5V10z" fill="#0c6ae0"/><text x="14" y="20" font-size="14" text-anchor="middle" fill="#fff">P</text></svg></button>
    <button class="dock-app open position-relative d-flex align-items-center justify-content-center" aria-label="贝壳"><svg width="30" height="30" viewBox="0 0 30 30"><circle cx="15" cy="15" r="15" fill="url(#gShell)"/><path d="M13 24Q3 18 3 9l3-4q0 11 7 19zM13.500 24Q7 12 8 3.500L12 2q-2 11 1.500 22zM14.500 24Q12 12 14 1h2q2 11-.5 23zM16.500 24Q20 13 18 2l4 1.500Q23 12 16.500 24zM17 24q7-8 7-19l3 4q0 9-10 15z" fill="#fff3e4"/></svg></button>
    <button class="dock-app open position-relative d-flex align-items-center justify-content-center" aria-label="搜狗输入法"><svg width="30" height="30"><use href="#sogou"/></svg></button>
    <button class="dock-app open position-relative d-flex align-items-center justify-content-center" aria-label="IObit Unlocker"><svg width="25" height="28"><use href="#lock"/></svg></button>
  </nav>
  <div class="dock-tray d-flex align-items-center justify-content-end">
    <button class="me-4" aria-label="显示隐藏的图标"><svg width="14" height="9" viewBox="0 0 14 9"><path d="m1 8 6-6 6 6" fill="none" stroke="#fff" stroke-width="1.600"/></svg></button>
    <button class="dock-ime me-3">中</button>
    <button class="dock-status d-flex align-items-center ps-1" aria-label="网络、音量、电池">
      <svg width="20" height="16" viewBox="0 0 20 16" fill="none" stroke="#fff" stroke-width="1.500"><path d="M.8 5.500q9.200-8.500 18.400 0M3.800 8.500q6.200-5.500 12.400 0M6.700 11.500q3.300-3 6.600 0"/><circle cx="10" cy="14" r="1.300" fill="#fff"/></svg>
      <svg width="20" height="16" viewBox="0 0 20 16" fill="none" stroke="#ddd" stroke-width="1.300"><path d="M1 5.500h3L9 1.500v13l-5-4H1zM13 5l6 6M19 5l-6 6"/></svg>
      <svg width="22" height="18" viewBox="0 0 22 18"><rect x="3" y="4" width="16" height="12" rx="2.500" fill="none" stroke="#fff" stroke-width="1.500"/><path d="M5 6.500h12v7H5zM20 8h2v4h-2z" fill="#fff"/><path d="M4.500 0 1 6.500h2.500L2.500 11 7 4.500H4.500L6 0z" fill="#fff" stroke="#1f2c36" stroke-width=".6"/></svg>
    </button>
    <button class="text-end me-2">14:00<br>2024/8/29</button>
    <button aria-label="通知"><svg width="20" height="20" viewBox="0 0 20 20" fill="#c3e4ea"><path d="M10 .5q6 .5 6.500 7v4l2 3.500v1h-17v-1l2-3.500v-4Q4 1 10 .5zM7.500 17.500h5q-.5 2.300-2.500 2.300t-2.500-2.300z"/></svg></button>
  </div>
</footer>
<script src="https://cdn.jsdelivr.net/npm/bootstrap@5.3.0/dist/js/bootstrap.bundle.min.js"></script>
</body>
</html>
